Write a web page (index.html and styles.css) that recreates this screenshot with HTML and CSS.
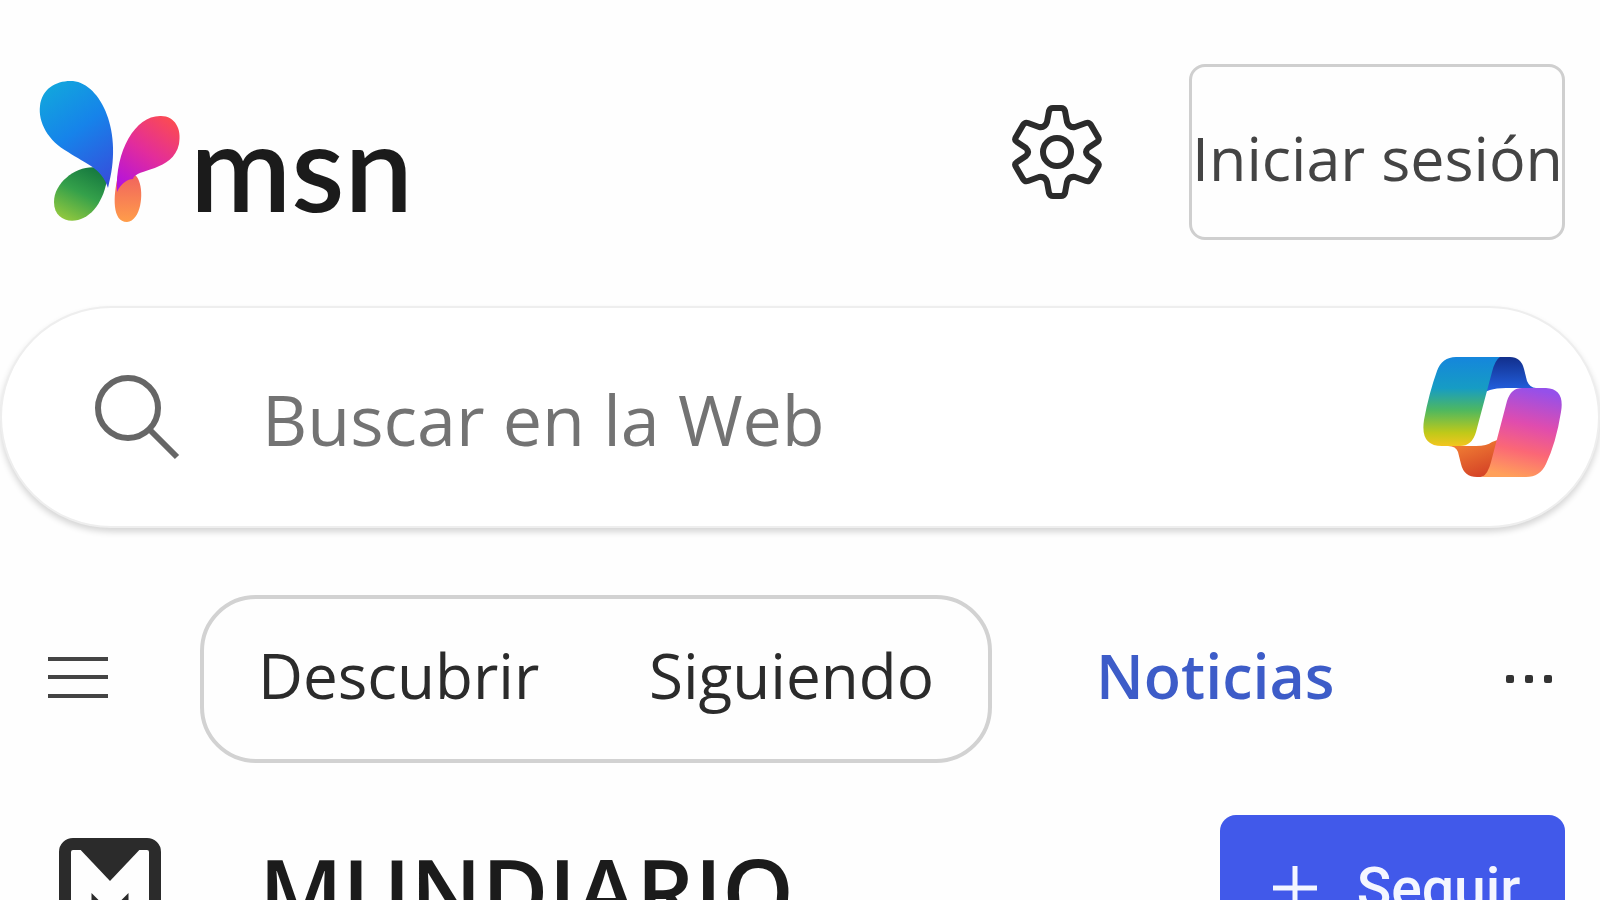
FILE: index.html
```html
<!DOCTYPE html>
<html lang="es">
<head>
  <meta charset="UTF-8">
  <meta name="viewport" content="width=device-width, initial-scale=1">
  <title>MSN</title>
  <link rel="stylesheet" href="styles.css">
</head>
<body>
  <header class="header">
    <a class="logo" href="#" aria-label="msn">
      <svg class="logo-icon" viewBox="0 0 144 144" aria-hidden="true">
        <defs>
          <linearGradient id="wingBlue" x1="0.3" y1="0" x2="0.8" y2="1">
            <stop offset="0" stop-color="#12a3de"/>
            <stop offset="0.45" stop-color="#1683ea"/>
            <stop offset="1" stop-color="#3550dc"/>
          </linearGradient>
          <linearGradient id="wingPink" x1="0.8" y1="0" x2="0.2" y2="1">
            <stop offset="0" stop-color="#fb4b52"/>
            <stop offset="0.5" stop-color="#e22c9c"/>
            <stop offset="1" stop-color="#b413dc"/>
          </linearGradient>
          <linearGradient id="wingGreen" x1="0.8" y1="0" x2="0.3" y2="1">
            <stop offset="0" stop-color="#14763f"/>
            <stop offset="0.5" stop-color="#34a04a"/>
            <stop offset="1" stop-color="#8dc63f"/>
          </linearGradient>
          <linearGradient id="wingOrange" x1="0.5" y1="0" x2="0.5" y2="1">
            <stop offset="0" stop-color="#f0605f"/>
            <stop offset="1" stop-color="#ff9d4a"/>
          </linearGradient>
        </defs>
        <path fill="url(#wingGreen)" d="M70 92C50 78 16 98 16 122C16 137 28 143 40 140C56 136 68 117 70 92Z"/>
        <path fill="url(#wingBlue)" d="M70 108C64 88 48 84 30 72C10 61 0 42 2 26C4 8 19 0 35 1C63 4 86 52 70 108Z"/>
        <path fill="url(#wingOrange)" d="M80 96C88 90 98 92 101 101C106 113 103 141 89 142C74 142 75 116 80 96Z"/>
        <path fill="url(#wingPink)" d="M79 112C77 70 98 35 123 36C137 36 144 49 141 64C135 92 98 88 95 99C90 99 83 103 79 112Z"/>
      </svg>
      <span class="logo-text">msn</span>
    </a>
    <div class="header-actions">
      <button class="icon-btn" type="button" aria-label="Configuración">
        <svg class="gear-icon" viewBox="0 0 92 96" aria-hidden="true">
          <path d="M36 18L38 7Q39 4 42 4H50Q53 4 54 7L56 18Q58 24 64 23L75 19Q78 18 80 21L87 33Q89 36 86 38L77 44Q73 48 77 52L86 58Q89 60 87 63L80 75Q78 78 75 77L64 73Q58 72 56 78L54 89Q53 92 50 92H42Q39 92 38 89L36 78Q34 72 28 73L17 77Q14 78 12 75L5 63Q3 60 6 58L15 52Q19 48 15 44L6 38Q3 36 5 33L12 21Q14 18 17 19L28 23Q34 24 36 18Z"/>
          <circle cx="46" cy="48" r="14"/>
        </svg>
      </button>
      <button class="login-btn" type="button">Iniciar sesión</button>
    </div>
  </header>

  <form class="search">
    <svg class="search-icon" viewBox="0 0 88 88" aria-hidden="true">
      <circle cx="34" cy="35" r="30"/>
      <path d="M56 57L83 84"/>
    </svg>
    <input class="search-input" type="text" placeholder="Buscar en la Web" aria-label="Buscar en la Web">
    <button class="icon-btn" type="button" aria-label="Copilot">
      <svg class="copilot-icon" viewBox="0 0 140 124" aria-hidden="true">
        <defs>
          <linearGradient id="ribbonLeft" x1="0" y1="0" x2="0" y2="1">
            <stop offset="0" stop-color="#1586dc"/>
            <stop offset="0.35" stop-color="#169cc4"/>
            <stop offset="0.6" stop-color="#4fb85f"/>
            <stop offset="0.85" stop-color="#bfc919"/>
            <stop offset="1" stop-color="#f3c51f"/>
          </linearGradient>
          <linearGradient id="ribbonRight" x1="0.6" y1="0" x2="0.4" y2="1">
            <stop offset="0" stop-color="#9550ea"/>
            <stop offset="0.4" stop-color="#e04cae"/>
            <stop offset="0.7" stop-color="#fb6776"/>
            <stop offset="1" stop-color="#ffa05a"/>
          </linearGradient>
          <linearGradient id="foldTop" x1="0.5" y1="0" x2="0.5" y2="1">
            <stop offset="0" stop-color="#122f8c"/>
            <stop offset="1" stop-color="#2463e4"/>
          </linearGradient>
          <linearGradient id="foldBottom" x1="0" y1="0" x2="0.5" y2="1">
            <stop offset="0" stop-color="#f68a37"/>
            <stop offset="1" stop-color="#d64627"/>
          </linearGradient>
        </defs>
        <path fill="url(#foldTop)" d="M64 2H88Q99 2 102 14L105 26Q108 33 114 33H84Q74 33 68 35L60 38Z"/>
        <path fill="url(#foldBottom)" d="M78 84L66 120Q62 122 55 122Q42 122 39 109L36 97Q34 91 26 91H54Q65 91 70 87Z"/>
        <path fill="url(#ribbonLeft)" d="M34 2H78Q73 5 70 17L54 77Q50 91 38 91H20Q-2 91 2 65Q7 38 15 16Q20 2 34 2Z"/>
        <path fill="url(#ribbonRight)" d="M100 33H124Q143 34 139 57Q134 88 124 109Q118 122 104 122H60Q66 119 69 107L85 46Q89 33 100 33Z"/>
      </svg>
    </button>
  </form>

  <nav class="nav">
    <button class="icon-btn" type="button" aria-label="Menú">
      <svg class="menu-icon" viewBox="0 0 60 48" aria-hidden="true">
        <path d="M0 4H60M0 22H60M0 41H60"/>
      </svg>
    </button>
    <div class="tabs">
      <a href="#">Descubrir</a>
      <a href="#">Siguiendo</a>
    </div>
    <a class="nav-link" href="#">Noticias</a>
    <button class="more-btn" type="button" aria-label="Más">
      <span class="dot"></span>
      <span class="dot"></span>
      <span class="dot"></span>
    </button>
  </nav>

  <section class="publisher">
    <svg class="publisher-icon" viewBox="0 0 104 104" aria-hidden="true">
      <rect x="7" y="6" width="90" height="92" rx="8" fill="none" stroke="#2b2b2b" stroke-width="12"/>
      <path fill="#2b2b2b" d="M17 6H87L52 43Z"/>
      <path fill="none" stroke="#2b2b2b" stroke-width="5" d="M36 88V61L52 77L68 61V88"/>
    </svg>
    <h1 class="publisher-name">MUNDIARIO</h1>
    <button class="follow-btn" type="button">
      <svg class="plus-icon" viewBox="0 0 44 44" aria-hidden="true">
        <path d="M22 0V44M0 22H44"/>
      </svg>
      Seguir
    </button>
  </section>
</body>
</html>
```
FILE: styles.css
```css
* {
  box-sizing: border-box;
}

body {
  margin: 0;
  min-height: 100vh;
  background-color: #fefefe;
  color: #2b2b2b;
  font-family: "Open Sans", "Noto Sans", sans-serif;
  font-size: 62px;
  overflow: hidden;
}

a {
  color: inherit;
  text-decoration: none;
}

button {
  font: inherit;
  color: inherit;
  cursor: pointer;
}

.icon-btn {
  flex: none;
  padding: 0;
  border: none;
  background: none;
}

.icon-btn svg {
  display: block;
}

/* Header */
.header {
  display: flex;
  justify-content: space-between;
  align-items: center;
  padding: 64px 35px 0 38px;
}

.logo {
  display: flex;
  align-items: center;
  gap: 8px;
}

.logo-icon {
  width: 144px;
  height: 144px;
}

.logo-text {
  padding-top: 26px;
  font-family: Lato, sans-serif;
  font-size: 122px;
  font-weight: 600;
  line-height: 112px;
  color: #1b1b1b;
}

.header-actions {
  display: flex;
  align-items: center;
  gap: 86px;
}

.gear-icon {
  width: 92px;
  height: 96px;
  fill: none;
  stroke: #2b2b2b;
  stroke-width: 6;
  stroke-linejoin: round;
}

.login-btn {
  width: 376px;
  height: 176px;
  padding: 10px 0 0;
  border: 3px solid #cfcfcf;
  border-radius: 16px;
  background-color: #fefefe;
  color: #444;
  font-size: 61px;
  white-space: nowrap;
}

/* Search box */
.search {
  display: flex;
  align-items: center;
  height: 222px;
  margin-top: 66px;
  padding: 0 36px 0 92px;
  border: 2px solid #eee;
  border-radius: 112px;
  background-color: #fff;
  box-shadow: 0 4px 6px rgba(0, 0, 0, 0.16);
}

.search-icon {
  flex: none;
  width: 88px;
  height: 88px;
  fill: none;
  stroke: #666;
  stroke-width: 6;
}

.search-input {
  flex: 1;
  min-width: 0;
  padding: 4px 0 0 80px;
  border: none;
  outline: none;
  background: none;
  font: inherit;
  font-size: 70px;
}

.search-input::placeholder {
  color: #737373;
  opacity: 1;
}

.copilot-icon {
  width: 140px;
  height: 124px;
}

/* Navigation */
.nav {
  display: flex;
  align-items: center;
  margin-top: 67px;
  padding: 0 48px;
}

.menu-icon {
  width: 60px;
  height: 48px;
  stroke: #444;
  stroke-width: 4;
}

.tabs {
  display: flex;
  align-items: center;
  justify-content: space-between;
  width: 792px;
  height: 168px;
  margin-left: 92px;
  padding: 0 54px 8px;
  border: 4px solid #d2d2d2;
  border-radius: 56px;
}

.nav-link {
  margin-left: 104px;
  padding-bottom: 8px;
  font-size: 61px;
  font-weight: 600;
  color: #3d5cc8;
}

.more-btn {
  display: flex;
  gap: 11px;
  margin-left: auto;
  padding: 0;
  border: none;
  background: none;
}

.dot {
  width: 8px;
  height: 8px;
  border-radius: 2px;
  background-color: #333;
}

/* Publisher */
.publisher {
  display: flex;
  align-items: center;
  margin-top: 52px;
  padding: 0 35px 0 58px;
}

.publisher-icon {
  flex: none;
  width: 104px;
  height: 104px;
}

.publisher-name {
  margin: 0 0 0 97px;
  font-size: 91px;
  font-weight: 600;
  line-height: 150px;
  color: #1b1b1b;
}

.follow-btn {
  display: flex;
  align-items: center;
  justify-content: center;
  gap: 40px;
  width: 345px;
  height: 146px;
  margin-left: auto;
  padding: 0 0 0 8px;
  align-self: flex-start;
  border: none;
  border-radius: 16px;
  background-color: #4159ea;
  color: #f4f6ff;
  font-family: Roboto, sans-serif;
  font-size: 57px;
  font-weight: 500;
}

.plus-icon {
  width: 44px;
  height: 44px;
  stroke: #f4f6ff;
  stroke-width: 5;
}
```
